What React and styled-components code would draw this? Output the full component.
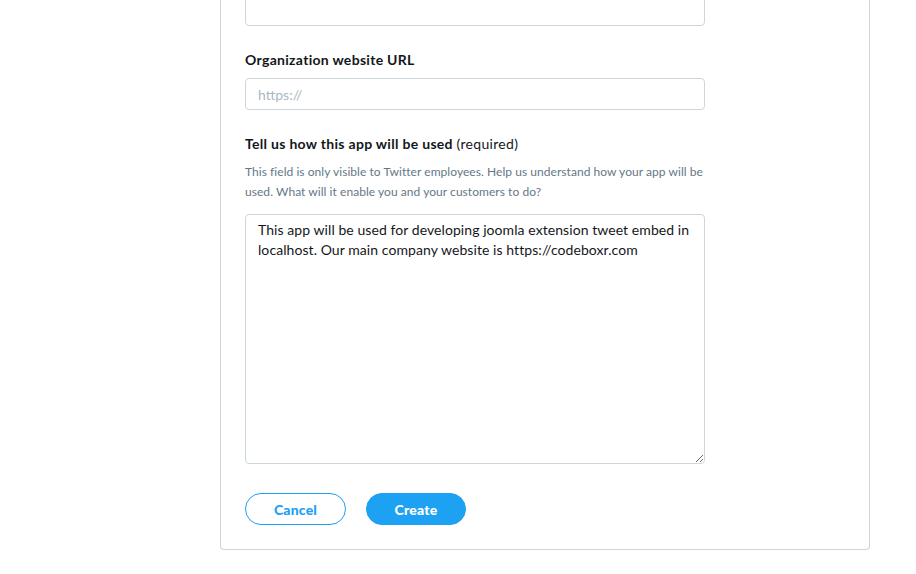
import React, { useState } from 'react'
import styled, { createGlobalStyle } from "styled-components";

const GlobalStyle = createGlobalStyle`
  html, body {
    margin: 0;
    padding: 0;
    background: #ffffff;
  }
  body {
    font-family: Lato, "Liberation Sans", sans-serif;
    color: #14171a;
  }
`;

const Page = styled.div`
  height: 574px;
  overflow: hidden;
  display: flex;
  flex-direction: column;
  justify-content: flex-end;
  padding-left: 220px;
`;

const Card = styled.div`
  width: 650px;
  box-sizing: border-box;
  border: 1px solid #ccd6dd;
  border-top: none;
  border-radius: 0 0 4px 4px;
  padding: 0 24px 24px 24px;
  margin-bottom: 24px;
`;

const Form = styled.div`
  width: 460px;
  display: flex;
  flex-direction: column;
`;

const Field = styled.div`
  display: flex;
  flex-direction: column;
  margin-bottom: ${p => p.$gap || 24}px;
`;

const Label = styled.label`
  font-size: 14px;
  line-height: 20px;
  font-weight: 700;
  letter-spacing: 0.3px;
  color: #14171a;
  margin-bottom: 8px;
`;

const Hint = styled.span`
  font-weight: 400;
`;

const Help = styled.p`
  margin: 0 0 12px 0;
  font-size: 12px;
  line-height: 20px;
  letter-spacing: 0.05px;
  color: #657786;
`;

const Input = styled.input`
  box-sizing: border-box;
  width: 100%;
  height: 32px;
  border: 1px solid #ccd6dd;
  border-radius: 4px;
  padding: 0 12px;
  font-family: inherit;
  font-size: 14px;
  color: #14171a;
  outline: none;
  &::placeholder {
    color: #aab8c2;
  }
`;

const TextArea = styled.textarea`
  box-sizing: border-box;
  width: 100%;
  height: 250px;
  border: 1px solid #ccd6dd;
  border-radius: 4px;
  padding: 5px 12px;
  font-family: inherit;
  font-size: 14px;
  line-height: 20px;
  letter-spacing: 0.07px;
  color: #14171a;
  outline: none;
`;

const Actions = styled.div`
  display: flex;
  gap: 20px;
`;

const Button = styled.button`
  box-sizing: border-box;
  width: ${p => p.$width}px;
  height: 32px;
  border-radius: 100px;
  border: 1px solid #1da1f2;
  background: ${p => (p.$primary ? '#1da1f2' : '#ffffff')};
  color: ${p => (p.$primary ? '#ffffff' : '#1da1f2')};
  font-family: inherit;
  font-size: 14px;
  font-weight: 900;
  letter-spacing: 0.2px;
  padding: 0;
  cursor: pointer;
`;

function App() {
  const [usage, setUsage] = useState(
    'This app will be used for developing joomla extension tweet embed in localhost. Our main company website is https://codeboxr.com'
  );
  const [url, setUrl] = useState('');

  return (
    <Page>
      <GlobalStyle />
      <Card>
        <Form>
          <Field>
            <Input />
          </Field>
          <Field>
            <Label>Organization website URL</Label>
            <Input placeholder="https://" value={url} onChange={e => setUrl(e.target.value)} />
          </Field>
          <Field $gap={29}>
            <Label>Tell us how this app will be used <Hint>(required)</Hint></Label>
            <Help>
              This field is only visible to Twitter employees. Help us understand how your app will be
              used. What will it enable you and your customers to do?
            </Help>
            <TextArea value={usage} onChange={e => setUsage(e.target.value)} />
          </Field>
          <Actions>
            <Button $width={101}>Cancel</Button>
            <Button $width={100} $primary>Create</Button>
          </Actions>
        </Form>
      </Card>
    </Page>
  );
}

export default App;
